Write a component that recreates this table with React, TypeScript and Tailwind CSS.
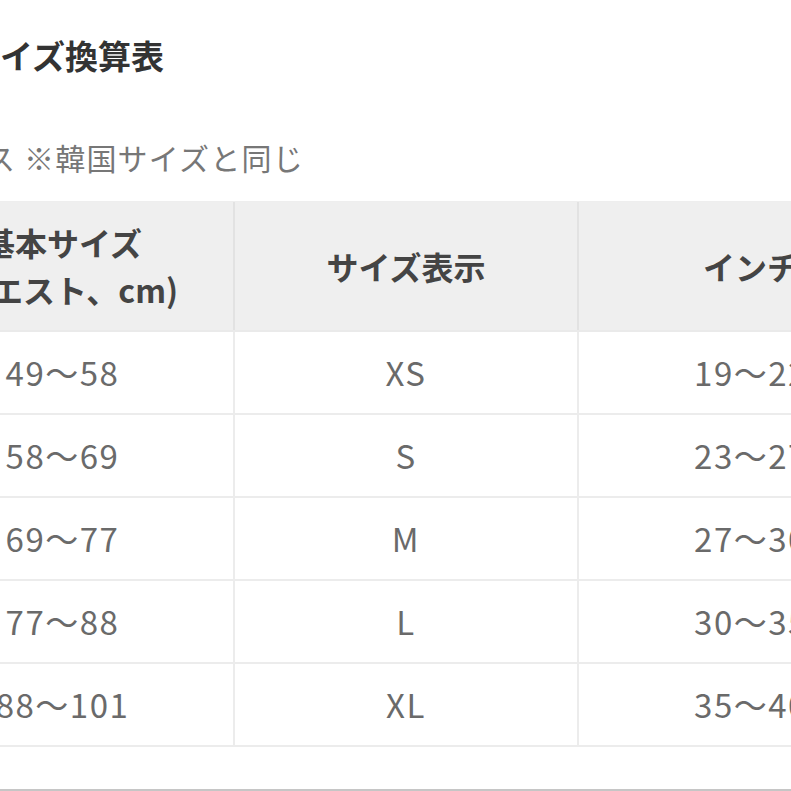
import React from 'react';

const rows = [
  ['49〜58', 'XS', '19〜22'],
  ['58〜69', 'S', '23〜27'],
  ['69〜77', 'M', '27〜30'],
  ['77〜88', 'L', '30〜35'],
  ['88〜101', 'XL', '35〜40'],
];

const App = () => {
  return (
    <div className="w-[791px] h-[791px] overflow-hidden bg-white border-b-2 border-[#c6c6c6] font-['Noto_Sans_CJK_JP',sans-serif]">
      {/* タイトル */}
      <h1 className="mt-[35px] -ml-[33px] text-[33px] leading-[40px] font-bold text-[#333] whitespace-nowrap">
        サイズ換算表
      </h1>

      {/* 注記 */}
      <p className="mt-[62px] -ml-[76px] text-[30px] tracking-[1.2px] leading-[40px] text-[#777] whitespace-nowrap">
        ベース ※韓国サイズと同じ
      </p>

      {/* 表 */}
      <div className="mt-[24px] -ml-[108px] w-[1031px] border-t border-[#eeeeee]">
        <div className="grid grid-cols-[343px_344px_344px] bg-[#efefef] border-b-2 border-[#eaeaea] text-[#444] font-bold text-[32px] leading-[47px]">
          <div className="h-[128px] flex flex-col items-center justify-center border-r-2 border-[#e2e2e2] whitespace-nowrap">
            <span>基本サイズ</span>
            <span>(ウエスト、cm)</span>
          </div>
          <div className="h-[128px] flex items-center justify-center border-r-2 border-[#e2e2e2]">サイズ表示</div>
          <div className="h-[128px] flex items-center justify-center">インチ</div>
        </div>

        {rows.map((row, i) => (
          <div
            key={i}
            className="grid grid-cols-[343px_344px_344px] border-b-2 border-[#ececec] text-[#6a6a6a] text-[33px] tracking-[1.5px]"
          >
            {row.map((cell, j) => (
              <div
                key={j}
                className={`h-[81px] flex items-center justify-center whitespace-nowrap ${
                  j < 2 ? 'border-r-2 border-[#ececec]' : ''
                }`}
              >
                {cell}
              </div>
            ))}
          </div>
        ))}
      </div>
    </div>
  );
};

export default App;
